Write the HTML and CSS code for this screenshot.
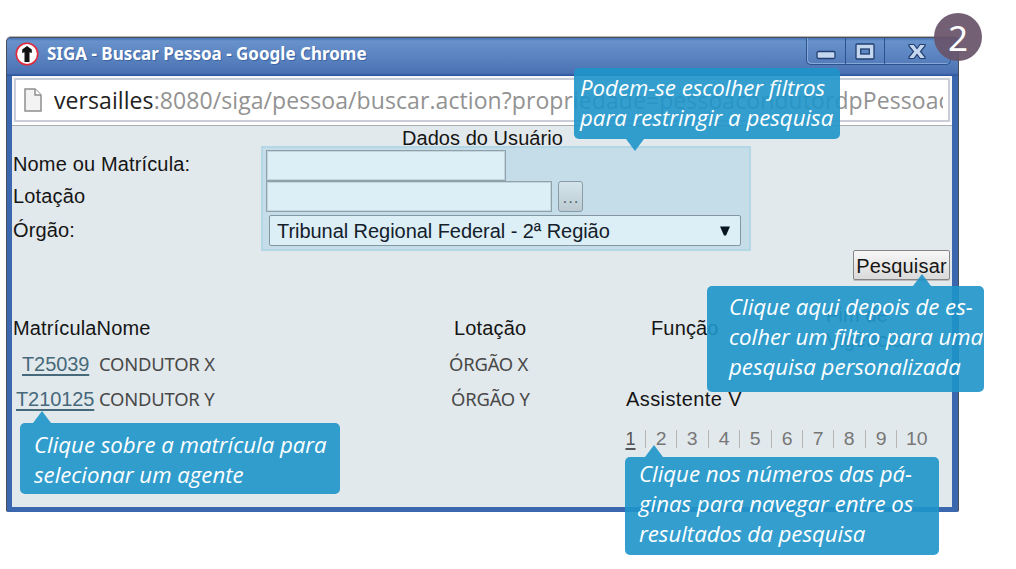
FILE: index.html
```html
<!DOCTYPE html>
<html lang="pt-BR">
<head>
<meta charset="utf-8">
<title>SIGA - Buscar Pessoa</title>
<link rel="stylesheet" href="styles.css">
</head>
<body>
<div class="window">
  <header class="titlebar">
    <svg class="favicon" width="24" height="24" viewBox="0 0 24 24"><circle cx="12" cy="12" r="10.7" fill="#fff" stroke="#e02a3c" stroke-width="1.6"/><path d="M12 4 16.800 7.600v3.400l-2.300-.8V20h-5v-9.800L7.200 11V7.600z" fill="#111"/></svg>
    <span class="title">SIGA - Buscar Pessoa - Google Chrome</span>
    <div class="controls">
      <span class="ctl"><svg width="20" height="10" viewBox="0 0 20 10"><rect x="1" y="1.500" width="18" height="7" rx="1.500" fill="#c5d7ef" stroke="#213f70" stroke-width="1.300"/></svg></span>
      <span class="ctl ctl-max"><svg width="20" height="18" viewBox="0 0 20 18"><rect x="1" y="1" width="18" height="15" rx="1" fill="#c5d7ef" stroke="#213f70" stroke-width="1.300"/><rect x="5.700" y="6" width="8.600" height="5" fill="#5f89c3" stroke="#213f70" stroke-width="1.300"/></svg></span>
      <span class="ctl ctl-close"><svg width="20" height="18" viewBox="0 0 20 18"><path d="M2 1.500h5L10 5.500 13 1.500h5v1.500L13.500 8.500 18 14v1.500h-5L10 11.500 7 15.500H2V14L6.500 8.500 2 3z" fill="#c5d7ef" stroke="#213f70" stroke-width="1.200"/></svg></span>
    </div>
  </header>
  <div class="address">
    <svg class="page-icon" width="18" height="24" viewBox="0 0 18 24"><path d="M1 1h10l6 6v16H1z" fill="#f3f3f3" stroke="#8f8f8f" stroke-width="1.500"/><path d="M11 1v6h6" fill="#fff" stroke="#8f8f8f" stroke-width="1.500"/></svg>
    <span class="url"><b>versailles</b>:8080/siga/pessoa/buscar.action?propriedade=pessoacondutordpPessoac</span>
  </div>
  <main class="page">
    <h1 class="heading">Dados do Usuário</h1>
    <form class="form">
      <div class="labels">
        <label class="l-nome">Nome ou Matrícula:</label>
        <label class="l-lot">Lotação</label>
        <label class="l-org">Órgão:</label>
      </div>
      <div class="fields">
        <div class="field field-name"></div>
        <div class="pair"><div class="field field-lot"></div><div class="more">...</div></div>
        <div class="select"><span>Tribunal Regional Federal - 2ª Região</span><svg width="10" height="10" viewBox="0 0 10 10"><path d="M0 .5h10L6 9.500H4z" fill="#06151f"/></svg></div>
      </div>
    </form>
    <div class="actions"><div class="button">Pesquisar</div></div>
    <section class="results">
      <div class="row head"><span>MatrículaNome</span><span class="c-lot">Lotação</span><span class="c-fun">Função</span><span class="c-fim">Fim de<br>Vigência</span></div>
      <div class="row r1"><span><a class="m1">T25039</a><i class="person">CONDUTOR X</i></span><span class="org">ÓRGÃO X</span></div>
      <div class="row r2"><span><a class="m2">T210125</a><i class="person">CONDUTOR Y</i></span><span class="org org-y">ÓRGÃO Y</span><span class="assist">Assistente V</span></div>
    </section>
    <nav class="pager"><u>1</u><s></s><b>2</b><s></s><b>3</b><s></s><b>4</b><s></s><b>5</b><s></s><b>6</b><s></s><b>7</b><s></s><b>8</b><s></s><b>9</b><s></s><b class="last">10</b></nav>
  </main>
</div>
<div class="badge">2</div>
<div class="callout c1 down"><span>Podem-se escolher filtros</span><span>para restringir a pesquisa</span></div>
<div class="callout c2 up"><span>Clique aqui depois de es-</span><span>colher um filtro para uma</span><span>pesquisa personalizada</span></div>
<div class="callout c3 up"><span>Clique sobre a matrícula para</span><span>selecionar um agente</span></div>
<div class="callout c4 up"><span>Clique nos números das pá-</span><span>ginas para navegar entre os</span><span>resultados da pesquisa</span></div>
</body>
</html>
```
FILE: styles.css
```css
* { box-sizing: border-box; }
body { margin: 0; width: 1016px; height: 569px; overflow: hidden; background: #fff; padding: 37px 57px 0 6px; font-family: "Liberation Sans", sans-serif; color: #151515; position: relative; }
.window { height: 475px; background: #3a67ad; border: solid #49505c; border-width: 1px 1px 0 1px; border-radius: 5px 5px 2px 2px; padding: 0 6px 5px 5px; box-shadow: 0 -1px #b8b8b8; }
.titlebar { height: 38px; margin: 0 -6px 0 -5px; border-radius: 4px 4px 0 0; display: flex; align-items: flex-start; background: linear-gradient(#4672b4, #6892cb 3px, #527ab9 28px, #4a72b4 35px, #29509a); padding-left: 8px; }
.favicon { margin-top: 4px; }
.title { font: bold 17px/32px "Noto Sans", sans-serif; color: #fff; margin-left: 8px; white-space: nowrap; text-shadow: 1px 1px #3c64a3; }
.controls { display: flex; position: absolute; left: 806px; top: 38px; height: 27px; width: 145px; border: 1px solid #2d538f; border-top: 0; border-radius: 0 0 5px 5px; box-shadow: inset 1px -1px #86a8d6; }
.ctl { width: 39px; padding: 12px 0 0 9px; border-right: 1px solid #2d538f; }
.ctl svg { display: block; }
.ctl-max { padding-top: 5px; }
.ctl-close { width: 65px; padding: 5px 0 0 22px; border: 0; }
.address { height: 49px; background: #fff; border: 2px solid #f5f6f8; border-bottom: 3px solid #fff; display: flex; align-items: center; padding-left: 10px; box-shadow: inset 0 0 0 2px #c9cdd7; overflow: hidden; }
.page-icon { flex: none; }
.url { font: 23px/40px "Open Sans", sans-serif; color: #929292; white-space: nowrap; margin-left: 12px; width: 889px; overflow: hidden; letter-spacing: .08px; }
.url b { font-weight: 400; color: #222; }
.page { height: 382px; background: #e2e9ec; border-top: 1px solid #aaadb0; font-size: 20px; letter-spacing: .15px; overflow: hidden; padding-top: 1px; }
.heading { margin: 0; height: 19px; font-size: 20px; font-weight: 400; line-height: 22px; padding-left: 390px; letter-spacing: .05px; white-space: nowrap; }
.form { display: flex; height: 105px; }
.labels { width: 249px; padding: 3px 0 0 1px; display: flex; flex-direction: column; line-height: 30px; }
.labels label { height: 32px; }
.l-org { padding-top: 2px; }
.fields { width: 490px; height: 105px; background: #c5dde9; border: 2px solid #b4d7e6; padding: 2px 0 0 3px; }
.field { background: #dceff7; border: 1px solid #8fa2ac; box-shadow: inset 0 0 0 1px #c4d5dd; height: 31px; }
.field-name { width: 240px; }
.field-lot { width: 286px; }
.pair { display: flex; gap: 6px; }
.more { width: 25px; height: 31px; border: 1px solid #8b9ba5; border-radius: 3px; background: linear-gradient(#d4e4eb, #bccbd2); text-align: center; line-height: 31px; color: #57666c; letter-spacing: 1px; font-size: 17px; padding-left: 1px; }
.select { margin: 3px 0 0 3px; width: 472px; height: 31px; border: 1px solid #84969f; border-radius: 2px; background: #dceff7; display: flex; justify-content: space-between; align-items: center; padding: 1px 10px 0 7px; font-size: 20px; letter-spacing: -.05px; color: #14202a; }
.actions { display: flex; justify-content: flex-end; padding-right: 2px; }
.button { width: 97px; height: 30px; margin-top: -1px; border: 1px solid #858585; border-radius: 2px; background: linear-gradient(#f7f7f7, #dadada); font-size: 20px; line-height: 30px; text-align: center; letter-spacing: .2px; white-space: nowrap; box-shadow: 0 1px #bbb; }
.results { padding-left: 1px; }
.row { display: flex; height: 35px; align-items: center; white-space: nowrap; }
.row > :first-child { width: 441px; flex: none; }
.head { margin-top: 30px; height: 36px; }
.row .c-lot { width: 197px; }
.row .c-fun { width: 175px; }
.c-fim { line-height: 25px; color: #444; }
.row a { color: #46697b; text-decoration: underline; text-underline-offset: 3px; display: inline-block; letter-spacing: -.1px; }
.m1 { margin-left: 9px; width: 77px; }
.m2 { margin-left: 3px; width: 83px; }
.person, .org { font: 18.500px/30px "Noto Sans", sans-serif; color: #484848; transform: scaleX(.995); transform-origin: 0 0; display: inline-block; letter-spacing: -.2px; }
.row .org { margin-left: -5px; width: 177px; }
.row .org-y { margin-left: -3px; width: 175px; }
.assist { letter-spacing: .4px; padding-top: 2px; }
.pager { display: flex; align-items: center; height: 22px; margin: 12px 0 0 613px; font-size: 18px; letter-spacing: 0; color: #777; }
.pager b { font-weight: 400; width: 12.400px; text-align: center; transform: scaleX(1.08); }
.pager .last { width: 22px; text-align: left; transform-origin: 0 0; }
.pager u { width: 11px; text-align: center; color: #555; text-underline-offset: 3px; text-decoration-thickness: 2px; }
.pager s { width: 1px; height: 18px; background: #b9b5b1; margin: 0 9px; }
.badge { position: absolute; left: 934px; top: 13px; width: 48px; height: 48px; border-radius: 50%; background: rgba(104, 84, 106, .93); color: #fff; font: 35px/50px "Noto Sans", sans-serif; text-align: center; }
.callout { position: absolute; background: rgba(30, 149, 202, .9); border-radius: 5px; color: #fff; font: italic 22.500px/30px "Open Sans", sans-serif; white-space: nowrap; }
.callout span { display: block; transform-origin: 0 0; transform: scaleX(.987); }
.callout::after { content: ""; position: absolute; width: 18px; height: 12px; background: rgba(30, 149, 202, .9); }
.up::after { top: -12px; clip-path: polygon(50% 0, 100% 100%, 0 100%); }
.down::after { bottom: -12px; clip-path: polygon(0 0, 100% 0, 50% 100%); }
.c1 { left: 574px; top: 68px; width: 266px; height: 71px; padding: 5px 0 0 6px; }
.c1::after { left: 52px; }
.c2 { left: 707px; top: 286px; width: 277px; height: 106px; padding: 6px 0 0 22px; }
.c2::after { left: 206px; }
.c3 { left: 20px; top: 423px; width: 320px; height: 71px; padding: 7px 0 0 14px; }
.c3::after { left: 13px; }
.c4 { left: 625px; top: 457px; width: 314px; height: 98px; padding: 2px 0 0 14px; }
.c4::after { left: 20px; }
```
